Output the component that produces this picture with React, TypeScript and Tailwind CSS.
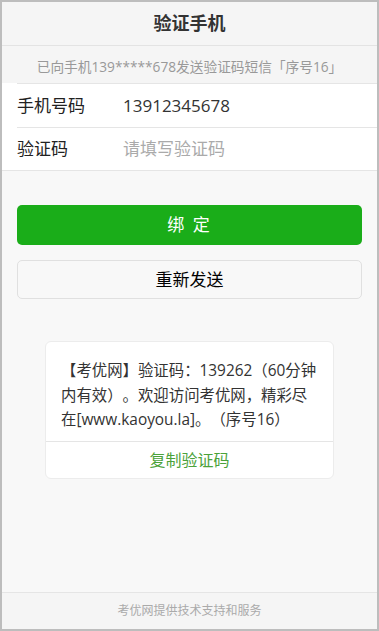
import React from "react";

export default function App() {
  const font = { fontFamily: '"Open Sans", "Noto Sans CJK SC", sans-serif' };
  return (
    <div
      className="w-[379px] h-[631px] box-border border-2 border-[#bdbdbd] bg-[#f8f8f8] flex flex-col overflow-hidden [text-spacing-trim:space-all]"
      style={font}
    >
      <div className="h-[44px] shrink-0 bg-[#f5f5f5] border-b border-[#e3e3e3] flex items-center justify-center text-[18px] font-bold text-[#333]">
        验证手机
      </div>
      <div className="h-[37px] shrink-0 bg-[#f5f5f5] flex items-center justify-center pt-[5px] text-[13.7px] text-[#999]">
        已向手机139*****678发送验证码短信「序号16」
      </div>
      <div className="bg-white border-b border-[#e5e5e5] pl-[15px]">
        <div className="h-[44px] border-t border-[#e5e5e5] flex items-center">
          <div className="w-[106px] text-[17px] text-[#222]">手机号码</div>
          <div className="text-[17px] text-[#333]">13912345678</div>
        </div>
        <div className="h-[43px] border-t border-[#e5e5e5] flex items-center">
          <div className="w-[106px] text-[17px] text-[#222]">验证码</div>
          <div className="text-[17px] text-[#aaa]">请填写验证码</div>
        </div>
      </div>
      <div className="px-[15px] mt-[34px] flex flex-col gap-[15px]">
        <button className="h-[40px] rounded-[5px] bg-[#1aad19] text-white text-[17px] tracking-[2px]">
          绑 定
        </button>
        <button className="h-[39px] rounded-[5px] bg-[#f8f8f8] border border-[#e0e0e0] text-black text-[17px]">
          重新发送
        </button>
      </div>
      <div className="mt-[42px] w-[289px] mx-auto bg-white rounded-[6px] border border-[#ececec]">
        <div className="pl-[15px] pr-[10px] pt-[17px] pb-[8px] text-[15.4px] leading-[24.5px] text-[#333]">
          <div className="whitespace-nowrap">【考优网】验证码：139262（60分钟</div>
          <div className="whitespace-nowrap">内有效）。欢迎访问考优网，精彩尽</div>
          <div className="whitespace-nowrap">在[www.kaoyou.la]。（序号16）</div>
        </div>
        <div className="h-[37px] border-t border-[#e5e5e5] flex items-center justify-center text-[16px] text-[#4ba23a]">
          复制验证码
        </div>
      </div>
      <div className="mt-auto h-[37px] shrink-0 border-t border-[#e5e5e5] bg-[#f5f5f5] flex items-center justify-center text-[12px] text-[#aaa]">
        考优网提供技术支持和服务
      </div>
    </div>
  );
}
